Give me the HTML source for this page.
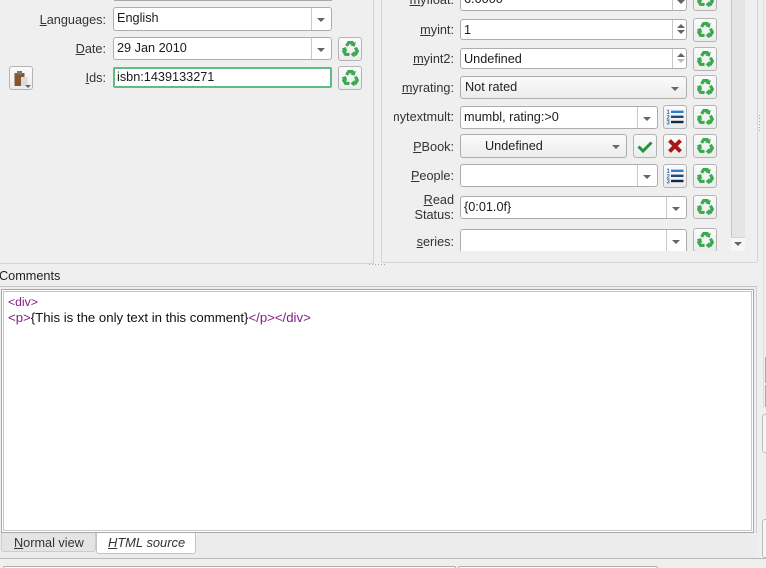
<!DOCTYPE html>
<html><head><meta charset="utf-8"><style>
html,body{margin:0;padding:0}
#r{position:relative;width:766px;height:568px;overflow:hidden;background:#efefef;font:12.7px/14px "Liberation Sans",Arial,sans-serif;color:#222}
#r div,#r svg{position:absolute;box-sizing:border-box}
.l{text-align:right;white-space:nowrap;color:#333}
.b{background:#fff;border:1px solid #adadad;border-radius:3px;padding-left:3px;white-space:nowrap;line-height:20px;color:#1c1c1c}
.s{top:0;bottom:0;width:1px;background:#c8c8c8}
.c{background:linear-gradient(#fbfbfb,#ececec);border:1px solid #adadad;border-radius:3px;white-space:nowrap;line-height:21px}
.t{width:24px;height:24px;background:linear-gradient(#fbfbfb,#ececec);border:1px solid #b4b4b4;border-radius:3px}
.t svg.i{left:2.5px;top:1.5px}
.ar{width:0;height:0;border-left:4px solid transparent;border-right:4px solid transparent;border-top:4px solid #666}
u{text-decoration:underline}
</style></head><body>
<svg width="0" height="0" style="position:absolute"><defs>
<g id="seg"><path d="M4.3 5.6 L6.3 2.4 H9.6 L10.2 3.3" fill="none" stroke="#38a94e" stroke-width="3"/><path d="M13 1.6 L7.4 4.8 L12 6.3 Z" fill="#38a94e"/></g>
<symbol id="rc" viewBox="0 0 16 16"><use href="#seg"/><use href="#seg" transform="rotate(120 8 8.8)"/><use href="#seg" transform="rotate(240 8 8.8)"/></symbol>
<symbol id="ls" viewBox="0 0 18 16"><g fill="#1f6fc0" font-family="Liberation Sans" font-size="6" font-weight="bold"><text x="0.5" y="5">1</text><text x="0.5" y="10.3">2</text><text x="0.5" y="15.5">3</text></g>
<rect x="5" y="1.6" width="12.5" height="2.4" fill="#2a7fd0"/><rect x="5" y="6.6" width="12.5" height="2.4" fill="#25496f"/><rect x="5" y="11.8" width="12.5" height="2.4" fill="#102a45"/></symbol>
</defs></svg>
<div id="r">
<!-- left panel -->
<div style="left:0;top:0;width:374px;height:264px;border-right:1px solid #d4d4d4;border-bottom:1px solid #d4d4d4"></div>
<div style="left:114px;top:0;width:218px;height:1px;background:#a8a8a8"></div>
<div class="l" style="right:660px;top:13px"><u>L</u>anguages:</div>
<div class="b" style="left:113px;top:7px;width:219px;height:24px;line-height:21px"><div class="s" style="left:197px"></div><div class="ar" style="left:203px;top:10px"></div>English</div>
<div class="l" style="right:660px;top:42px"><u>D</u>ate:</div>
<div class="b" style="left:113px;top:37px;width:219px;height:23px"><div class="s" style="left:197px"></div><div class="ar" style="left:203px;top:10px"></div>29 Jan 2010</div>
<div class="t" style="left:338px;top:37px"><svg class="i" width="17" height="17"><use href="#rc"/></svg></div>
<div class="t" style="left:9px;top:66px"><svg style="left:3px;top:2px" width="18" height="19" viewBox="0 0 18 19"><rect x="1.5" y="4" width="10" height="13" fill="#86562e"/><rect x="4" y="2" width="5" height="3.5" fill="#777"/><rect x="8" y="8" width="6.5" height="9" fill="#dcdcdc"/><path d="M12 16 H18 L15 19 Z" fill="#666"/></svg></div>
<div class="l" style="right:660px;top:71px"><u>I</u>ds:</div>
<div class="b" style="left:113px;top:67px;width:219px;height:21px;border:2px solid #5fbc82;border-radius:2px;padding-left:2px;line-height:17px">isbn:1439133271</div>
<div class="t" style="left:338px;top:66px"><svg class="i" width="17" height="17"><use href="#rc"/></svg></div>
<!-- right panel -->
<div style="left:381px;top:-4px;width:377px;height:267px;border:1px solid #d4d4d4;border-radius:2px"></div>
<div style="left:731px;top:0;width:14px;height:237px;background:#e5e5e5;border-left:1px solid #c6c6c6"></div>
<div style="left:731px;top:237px;width:14px;height:14px;background:#f6f6f6;border-top:1px solid #d4d4d4"></div>
<div class="ar" style="left:734px;top:242px"></div>
<div style="left:382px;top:0;width:349px;height:251px;overflow:hidden">
<div class="l" style="right:277px;top:-7px"><u>m</u>yfloat:</div>
<div class="b" style="left:78px;top:-12px;width:227px;height:23px">6.0000<div class="s" style="left:211px"></div><div class="ar" style="left:216px;top:11px"></div></div>
<div class="t" style="left:311px;top:-13px"><svg class="i" width="17" height="17"><use href="#rc"/></svg></div>
<div class="l" style="right:277px;top:23px"><u>m</u>yint:</div>
<div class="b" style="left:78px;top:19px;width:227px;height:21px;line-height:20px">1<div class="s" style="left:211px"></div><div class="ar" style="left:216px;top:10px"></div><div class="ar" style="left:216px;top:4px;border-top:0;border-bottom:4px solid #666"></div></div>
<div class="t" style="left:311px;top:18px"><svg class="i" width="17" height="17"><use href="#rc"/></svg></div>
<div class="l" style="right:277px;top:52px"><u>m</u>yint2:</div>
<div class="b" style="left:78px;top:48px;width:227px;height:21px;line-height:20px">Undefined<div class="s" style="left:211px"></div><div class="ar" style="left:216px;top:10px;border-top-color:#bbb"></div><div class="ar" style="left:216px;top:4px;border-top:0;border-bottom:4px solid #666"></div></div>
<div class="t" style="left:311px;top:47px"><svg class="i" width="17" height="17"><use href="#rc"/></svg></div>
<div class="l" style="right:277px;top:81px"><u>m</u>yrating:</div>
<div class="c" style="left:78px;top:76px;width:227px;height:23px;padding-left:4px">Not rated<div class="ar" style="left:210px;top:10px"></div></div>
<div class="t" style="left:311px;top:75px"><svg class="i" width="17" height="17"><use href="#rc"/></svg></div>
<div class="l" style="right:277px;top:110px">mytextmult:</div>
<div style="left:0;top:100px;width:12px;height:30px;background:#efefef"></div>
<div class="b" style="left:78px;top:106px;width:198px;height:23px">mumbl, rating:&gt;0<div class="s" style="left:176px"></div><div class="ar" style="left:182px;top:10px"></div></div>
<div class="t" style="left:281px;top:105px"><svg style="left:2px;top:3px" width="18" height="16"><use href="#ls"/></svg></div>
<div class="t" style="left:311px;top:105px"><svg class="i" width="17" height="17"><use href="#rc"/></svg></div>
<div class="l" style="right:277px;top:140px"><u>P</u>Book:</div>
<div class="c" style="left:78px;top:134px;width:167px;height:24px;padding-left:24px;line-height:23px">Undefined<div class="ar" style="left:151px;top:10px"></div></div>
<div class="t" style="left:251px;top:134px"><svg style="left:3px;top:3px" width="16" height="16" viewBox="0 0 16 16"><path d="M1.5 8.5 L6 13 L14.5 4.5" fill="none" stroke="#21953a" stroke-width="3"/></svg></div>
<div class="t" style="left:281px;top:134px"><svg style="left:3px;top:3px" width="16" height="16" viewBox="0 0 16 16"><path d="M2.5 2.5 L13.5 13.5 M13.5 2.5 L2.5 13.5" fill="none" stroke="#a81818" stroke-width="4"/></svg></div>
<div class="t" style="left:311px;top:134px"><svg class="i" width="17" height="17"><use href="#rc"/></svg></div>
<div class="l" style="right:277px;top:169px"><u>P</u>eople:</div>
<div class="b" style="left:78px;top:164px;width:198px;height:23px"><div class="s" style="left:176px"></div><div class="ar" style="left:182px;top:10px"></div></div>
<div class="t" style="left:281px;top:164px"><svg style="left:2px;top:3px" width="18" height="16"><use href="#ls"/></svg></div>
<div class="t" style="left:311px;top:164px"><svg class="i" width="17" height="17"><use href="#rc"/></svg></div>
<div class="l" style="right:277px;top:193px;line-height:15px"><u>R</u>ead<br>Status:</div>
<div class="b" style="left:78px;top:196px;width:227px;height:23px">{0:01.0f}<div class="s" style="left:205px"></div><div class="ar" style="left:211px;top:10px"></div></div>
<div class="t" style="left:311px;top:195px"><svg class="i" width="17" height="17"><use href="#rc"/></svg></div>
<div class="l" style="right:277px;top:235px"><u>s</u>eries:</div>
<div class="b" style="left:78px;top:229px;width:227px;height:30px"><div class="s" style="left:205px"></div><div class="ar" style="left:211px;top:10px"></div></div>
<div class="t" style="left:311px;top:228px"><svg class="i" width="17" height="17"><use href="#rc"/></svg></div>
</div>
<!-- splitter dots -->
<div style="left:369px;top:264px;width:17px;height:1px;background:repeating-linear-gradient(90deg,#aaa 0 1px,transparent 1px 3px)"></div>
<div style="left:759px;top:115px;width:1px;height:18px;background:repeating-linear-gradient(#aaa 0 1px,transparent 1px 3px)"></div>
<div style="left:763px;top:0;width:1px;height:408px;background:#dcdcdc"></div>
<!-- comments -->
<div style="left:-1px;top:269px;white-space:nowrap;color:#222">Comments</div>
<div style="left:0;top:286px;width:757px;height:272px;border-top:1px solid #c4c4c4;border-right:1px solid #d0d0d0"></div>
<div style="left:1px;top:289px;width:753px;height:244px;background:#fff;border:1px solid #a8a8a8;outline:1px solid #c8c8c8;outline-offset:-3px"></div>
<div style="left:8px;top:294px;font-size:13.2px;line-height:15px;white-space:nowrap;color:#111"><span style="color:#861a86;font-size:12.2px">&lt;div&gt;</span><br><span style="color:#861a86">&lt;p&gt;</span>{This is the only text in this comment}<span style="color:#861a86">&lt;/p&gt;&lt;/div&gt;</span></div>
<div style="left:0;top:533px;width:757px;height:25px;background:#ececec"></div>
<div style="left:1px;top:533px;width:95px;height:19px;background:#e4e4e4;border:1px solid #ccc;border-top:0;border-radius:0 0 3px 3px;padding-left:12px;line-height:20px;color:#333;overflow:hidden"><u>N</u>ormal view</div>
<div style="left:96px;top:533px;width:100px;height:21px;background:#fff;border:1px solid #c4c4c4;border-top:0;border-radius:0 0 3px 3px;padding-left:11px;line-height:20px;font-style:italic;font-size:12.9px;color:#333"><u>H</u>TML source</div>
<div style="left:0;top:558px;width:766px;height:1px;background:#b8b8b8"></div>
<div style="left:3px;top:566px;width:453px;height:4px;background:#fff;border:1px solid #adadad;border-radius:3px"></div>
<div style="left:458px;top:566px;width:200px;height:4px;background:#fff;border:1px solid #adadad;border-radius:3px"></div>
<div style="left:765px;top:357px;width:1px;height:26px;background:#aaa"></div>
<div style="left:765px;top:385px;width:1px;height:22px;background:#aaa"></div>
<div style="left:762px;top:414px;width:8px;height:39px;background:#f6f6f6;border:1px solid #bbb;border-radius:3px"></div>
<div style="left:762px;top:519px;width:8px;height:39px;background:#f6f6f6;border:1px solid #bbb;border-radius:3px"></div>
</div>
</body></html>
